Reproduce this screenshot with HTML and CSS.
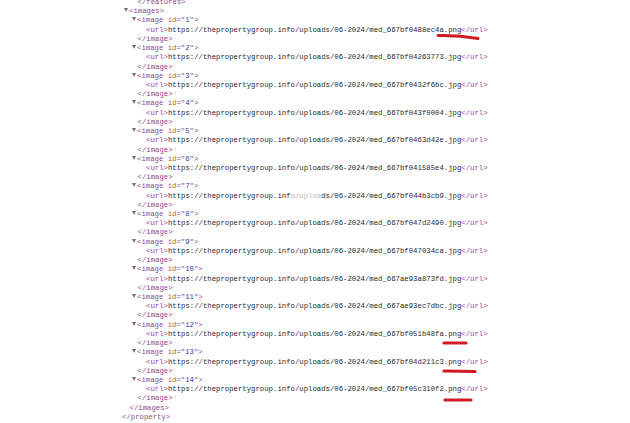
FILE: index.html
```html
<!DOCTYPE html>
<html>
<head>
<meta charset="utf-8">
<link rel="stylesheet" href="styles.css">
</head>
<body>
<div class="doc">
  <div class="line d2"><span class="tag">&lt;/features&gt;</span></div>
  <div class="line d1"><span class="tri"></span><span class="tag">&lt;images&gt;</span></div>

  <div class="line d2"><span class="tri"></span><span class="tag">&lt;image </span><span class="an">id</span><span class="tag">="</span><span class="av">1</span><span class="tag">"&gt;</span></div>
  <div class="line d3"><span class="tag">&lt;url&gt;</span>https://thepropertygroup.info/uploads/06-2024/med_667bf0488ec4a.png<span class="tag">&lt;/url&gt;</span></div>
  <div class="line d2"><span class="tag">&lt;/image&gt;</span></div>

  <div class="line d2"><span class="tri"></span><span class="tag">&lt;image </span><span class="an">id</span><span class="tag">="</span><span class="av">2</span><span class="tag">"&gt;</span></div>
  <div class="line d3"><span class="tag">&lt;url&gt;</span>https://thepropertygroup.info/uploads/06-2024/med_667bf04263773.jpg<span class="tag">&lt;/url&gt;</span></div>
  <div class="line d2"><span class="tag">&lt;/image&gt;</span></div>

  <div class="line d2"><span class="tri"></span><span class="tag">&lt;image </span><span class="an">id</span><span class="tag">="</span><span class="av">3</span><span class="tag">"&gt;</span></div>
  <div class="line d3"><span class="tag">&lt;url&gt;</span>https://thepropertygroup.info/uploads/06-2024/med_667bf0432f6bc.jpg<span class="tag">&lt;/url&gt;</span></div>
  <div class="line d2"><span class="tag">&lt;/image&gt;</span></div>

  <div class="line d2"><span class="tri"></span><span class="tag">&lt;image </span><span class="an">id</span><span class="tag">="</span><span class="av">4</span><span class="tag">"&gt;</span></div>
  <div class="line d3"><span class="tag">&lt;url&gt;</span>https://thepropertygroup.info/uploads/06-2024/med_667bf043f0004.jpg<span class="tag">&lt;/url&gt;</span></div>
  <div class="line d2"><span class="tag">&lt;/image&gt;</span></div>

  <div class="line d2"><span class="tri"></span><span class="tag">&lt;image </span><span class="an">id</span><span class="tag">="</span><span class="av">5</span><span class="tag">"&gt;</span></div>
  <div class="line d3"><span class="tag">&lt;url&gt;</span>https://thepropertygroup.info/uploads/06-2024/med_667bf0463d42e.jpg<span class="tag">&lt;/url&gt;</span></div>
  <div class="line d2"><span class="tag">&lt;/image&gt;</span></div>

  <div class="line d2"><span class="tri"></span><span class="tag">&lt;image </span><span class="an">id</span><span class="tag">="</span><span class="av">6</span><span class="tag">"&gt;</span></div>
  <div class="line d3"><span class="tag">&lt;url&gt;</span>https://thepropertygroup.info/uploads/06-2024/med_667bf041585e4.jpg<span class="tag">&lt;/url&gt;</span></div>
  <div class="line d2"><span class="tag">&lt;/image&gt;</span></div>

  <div class="line d2"><span class="tri"></span><span class="tag">&lt;image </span><span class="an">id</span><span class="tag">="</span><span class="av">7</span><span class="tag">"&gt;</span></div>
  <div class="line d3"><span class="tag">&lt;url&gt;</span>https://thepropertygroup.inf<span class="faint">o/uploa</span>ds/06-2024/med_667bf044b3cb9.jpg<span class="tag">&lt;/url&gt;</span></div>
  <div class="line d2"><span class="tag">&lt;/image&gt;</span></div>

  <div class="line d2"><span class="tri"></span><span class="tag">&lt;image </span><span class="an">id</span><span class="tag">="</span><span class="av">8</span><span class="tag">"&gt;</span></div>
  <div class="line d3"><span class="tag">&lt;url&gt;</span>https://thepropertygroup.info/uploads/06-2024/med_667bf047d2490.jpg<span class="tag">&lt;/url&gt;</span></div>
  <div class="line d2"><span class="tag">&lt;/image&gt;</span></div>

  <div class="line d2"><span class="tri"></span><span class="tag">&lt;image </span><span class="an">id</span><span class="tag">="</span><span class="av">9</span><span class="tag">"&gt;</span></div>
  <div class="line d3"><span class="tag">&lt;url&gt;</span>https://thepropertygroup.info/uploads/06-2024/med_667bf047034ca.jpg<span class="tag">&lt;/url&gt;</span></div>
  <div class="line d2"><span class="tag">&lt;/image&gt;</span></div>

  <div class="line d2"><span class="tri"></span><span class="tag">&lt;image </span><span class="an">id</span><span class="tag">="</span><span class="av">10</span><span class="tag">"&gt;</span></div>
  <div class="line d3"><span class="tag">&lt;url&gt;</span>https://thepropertygroup.info/uploads/06-2024/med_667ae93a873fd.jpg<span class="tag">&lt;/url&gt;</span></div>
  <div class="line d2"><span class="tag">&lt;/image&gt;</span></div>

  <div class="line d2"><span class="tri"></span><span class="tag">&lt;image </span><span class="an">id</span><span class="tag">="</span><span class="av">11</span><span class="tag">"&gt;</span></div>
  <div class="line d3"><span class="tag">&lt;url&gt;</span>https://thepropertygroup.info/uploads/06-2024/med_667ae93ec7dbc.jpg<span class="tag">&lt;/url&gt;</span></div>
  <div class="line d2"><span class="tag">&lt;/image&gt;</span></div>

  <div class="line d2"><span class="tri"></span><span class="tag">&lt;image </span><span class="an">id</span><span class="tag">="</span><span class="av">12</span><span class="tag">"&gt;</span></div>
  <div class="line d3"><span class="tag">&lt;url&gt;</span>https://thepropertygroup.info/uploads/06-2024/med_667bf051b48fa.png<span class="tag">&lt;/url&gt;</span></div>
  <div class="line d2"><span class="tag">&lt;/image&gt;</span></div>

  <div class="line d2"><span class="tri"></span><span class="tag">&lt;image </span><span class="an">id</span><span class="tag">="</span><span class="av">13</span><span class="tag">"&gt;</span></div>
  <div class="line d3"><span class="tag">&lt;url&gt;</span>https://thepropertygroup.info/uploads/06-2024/med_667bf04d211c3.png<span class="tag">&lt;/url&gt;</span></div>
  <div class="line d2"><span class="tag">&lt;/image&gt;</span></div>

  <div class="line d2"><span class="tri"></span><span class="tag">&lt;image </span><span class="an">id</span><span class="tag">="</span><span class="av">14</span><span class="tag">"&gt;</span></div>
  <div class="line d3"><span class="tag">&lt;url&gt;</span>https://thepropertygroup.info/uploads/06-2024/med_667bf05c310f2.png<span class="tag">&lt;/url&gt;</span></div>
  <div class="line d2"><span class="tag">&lt;/image&gt;</span></div>

  <div class="line d1"><span class="tag">&lt;/images&gt;</span></div>
  <div class="line d0"><span class="tag">&lt;/property&gt;</span></div>
</div>

<svg class="marks" width="630" height="423" viewBox="0 0 630 423">
  <path d="M438 35.5 Q458 35 478 38.5" fill="none" stroke="#d11a22" stroke-width="3" stroke-linecap="round"/>
  <path d="M444 343 L466 343" fill="none" stroke="#d11a22" stroke-width="3.2" stroke-linecap="round"/>
  <path d="M444 371 L475 371.5" fill="none" stroke="#d11a22" stroke-width="3.2" stroke-linecap="round"/>
  <path d="M445 400 L471 400" fill="none" stroke="#d11a22" stroke-width="3.2" stroke-linecap="round"/>
</svg>
</body>
</html>
```

FILE: styles.css
```css
html, body {
  margin: 0;
  padding: 0;
  background: #ffffff;
}

body {
  position: relative;
  width: 630px;
  height: 423px;
  overflow: hidden;
}

.doc {
  margin-top: -2px;
  font-family: "Liberation Mono", monospace;
  font-size: 7.3px;
  line-height: 9.22px;
  color: #2a2a2a;
}

.line {
  height: 9.22px;
  white-space: pre;
}

.d0 { padding-left: 122px; }
.d1 { padding-left: 129.5px; }
.d2 { padding-left: 137.5px; }
.d3 { padding-left: 146px; }

.tag { color: #8f4a8f; }
.an { color: #b0661e; }
.av { color: #3a3aae; }
.faint { color: #b8b8b8; }

.tri {
  display: inline-block;
  width: 0;
  height: 0;
  margin-left: -6px;
  margin-right: 1.5px;
  border-left: 2.3px solid transparent;
  border-right: 2.3px solid transparent;
  border-top: 4px solid #707070;
  vertical-align: 1px;
}

.marks {
  position: absolute;
  left: 0;
  top: 0;
  pointer-events: none;
}
```
